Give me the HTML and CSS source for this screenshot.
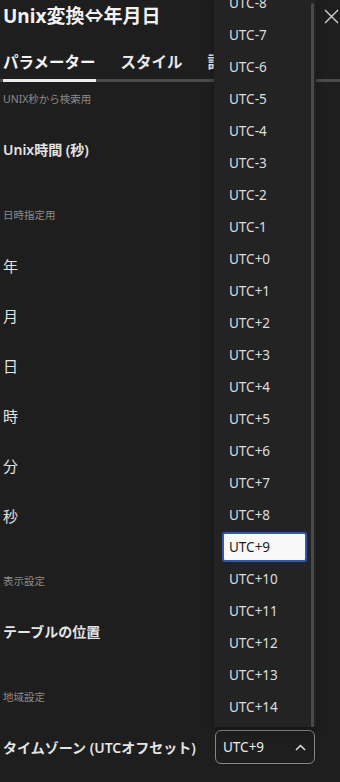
FILE: index.html
```html
<!DOCTYPE html>
<html lang="ja">
<head>
    <meta charset="UTF-8">
    <meta name="viewport" content="width=device-width, initial-scale=1.0">
    <title>Unix変換⇔年月日</title>
    <link rel="stylesheet" href="styles.css">
</head>
<body>
    <div class="pane">
        <div class="pane-header">
            <span class="pane-title">Unix変換⇔年月日</span>
            <button class="close-button" aria-label="閉じる">
                <svg width="15" height="15" viewBox="0 0 15 15"><path d="M1 1 L14 14 M14 1 L1 14" stroke="#d6d6d6" stroke-width="1.3" fill="none"/></svg>
            </button>
        </div>
        <div class="tabs">
            <div class="tab active">パラメーター</div>
            <div class="tab">スタイル</div>
            <div class="tab">詳細</div>
        </div>

        <div class="section first">
            <div class="section-label">UNIX秒から検索用</div>
            <div class="field"><span class="field-label strong">Unix時間 (秒)</span></div>
        </div>

        <div class="section">
            <div class="section-label">日時指定用</div>
            <div class="field"><span class="field-label">年</span></div>
            <div class="field"><span class="field-label">月</span></div>
            <div class="field"><span class="field-label">日</span></div>
            <div class="field"><span class="field-label">時</span></div>
            <div class="field"><span class="field-label">分</span></div>
            <div class="field"><span class="field-label">秒</span></div>
        </div>

        <div class="section">
            <div class="section-label">表示設定</div>
            <div class="field"><span class="field-label strong">テーブルの位置</span></div>
        </div>

        <div class="section">
            <div class="section-label">地域設定</div>
            <div class="field">
                <span class="field-label strong">タイムゾーン (UTCオフセット)</span>
                <div class="select">
                    <span>UTC+9</span>
                    <svg width="11" height="7" viewBox="0 0 11 7"><path d="M1 6 L5.5 1.5 L10 6" stroke="#e0e0e0" stroke-width="1.5" fill="none"/></svg>
                </div>
            </div>
        </div>

        <!-- open timezone list -->
        <div class="dropdown">
            <ul class="dropdown-list">
                <li>UTC-12</li>
                <li>UTC-11</li>
                <li>UTC-10</li>
                <li>UTC-9</li>
                <li>UTC-8</li>
                <li>UTC-7</li>
                <li>UTC-6</li>
                <li>UTC-5</li>
                <li>UTC-4</li>
                <li>UTC-3</li>
                <li>UTC-2</li>
                <li>UTC-1</li>
                <li>UTC+0</li>
                <li>UTC+1</li>
                <li>UTC+2</li>
                <li>UTC+3</li>
                <li>UTC+4</li>
                <li>UTC+5</li>
                <li>UTC+6</li>
                <li>UTC+7</li>
                <li>UTC+8</li>
                <li class="selected">UTC+9</li>
                <li>UTC+10</li>
                <li>UTC+11</li>
                <li>UTC+12</li>
                <li>UTC+13</li>
                <li>UTC+14</li>
            </ul>
            <div class="dropdown-scrollbar"></div>
        </div>
    </div>
</body>
</html>
```

FILE: styles.css
```css
body {
    margin: 0;
    width: 340px;
    height: 782px;
    overflow: hidden;
    background-color: #1e1e1e;
    color: #e6e6e6;
    font-family: "Noto Sans", "Noto Sans CJK JP", sans-serif;
}
.pane {
    position: relative;
    height: 100%;
    padding-left: 3px;
}
.pane-header {
    height: 32px;
    display: flex;
    align-items: center;
    justify-content: space-between;
    padding-right: 1px;
}
.pane-title {
    font-size: 19px;
    font-weight: 700;
    color: #f2f2f2;
    line-height: 32px;
}
.close-button {
    background: none;
    border: none;
    padding: 0;
    display: flex;
}
.tabs {
    display: flex;
    gap: 25px;
    border-bottom: 3px solid #4b4b4b;
    margin-left: -3px;
    padding-left: 3px;
}
.tab {
    font-size: 15.5px;
    font-weight: 700;
    line-height: 20px;
    padding: 20px 0 7px;
    color: #e8e8e8;
    border-bottom: 3px solid transparent;
    margin-bottom: -3px;
    white-space: nowrap;
}
.tab.active {
    color: #f4f4f4;
    border-bottom-color: #ececec;
}
.section {
    padding-top: 33px;
}
.section.first {
    padding-top: 9px;
}
.section-label {
    font-size: 10.5px;
    line-height: 16px;
    color: #8c8c8c;
    margin-bottom: 17px;
}
.field {
    height: 50px;
    display: flex;
    align-items: center;
    justify-content: space-between;
    padding-right: 25px;
}
.field-label {
    font-size: 15px;
    color: #e4e4e4;
}
.field-label.strong {
    font-size: 14px;
    font-weight: 600;
}
.select {
    box-sizing: border-box;
    width: 100px;
    height: 34px;
    border: 1px solid #878787;
    border-radius: 6px;
    display: flex;
    align-items: center;
    justify-content: space-between;
    padding: 0 8px 0 7px;
    font-size: 13.5px;
    color: #ececec;
}
.dropdown {
    position: absolute;
    left: 214px;
    top: 0;
    width: 102px;
    height: 727px;
    overflow: hidden;
    background-color: #232323;
    box-shadow: 0 2px 8px rgba(0, 0, 0, 0.35);
}
.dropdown-list {
    list-style: none;
    margin: -141px 0 0;
    padding: 0;
}
.dropdown-list li {
    box-sizing: border-box;
    height: 32px;
    margin: 0 9px 0 8px;
    padding-left: 7px;
    display: flex;
    align-items: center;
    font-size: 13.5px;
    color: #dedede;
}
.dropdown-list li.selected {
    height: 30px;
    margin-top: 1px;
    margin-bottom: 1px;
    padding-left: 5px;
    background-color: #f8f8f8;
    color: #1c1c1c;
    border: 2px solid #3554b4;
    border-radius: 3px;
}
.dropdown-scrollbar {
    position: absolute;
    top: 3px;
    bottom: 0;
    right: 2px;
    width: 3px;
    border-radius: 2px;
    background-color: #4a4a4a;
}
```
